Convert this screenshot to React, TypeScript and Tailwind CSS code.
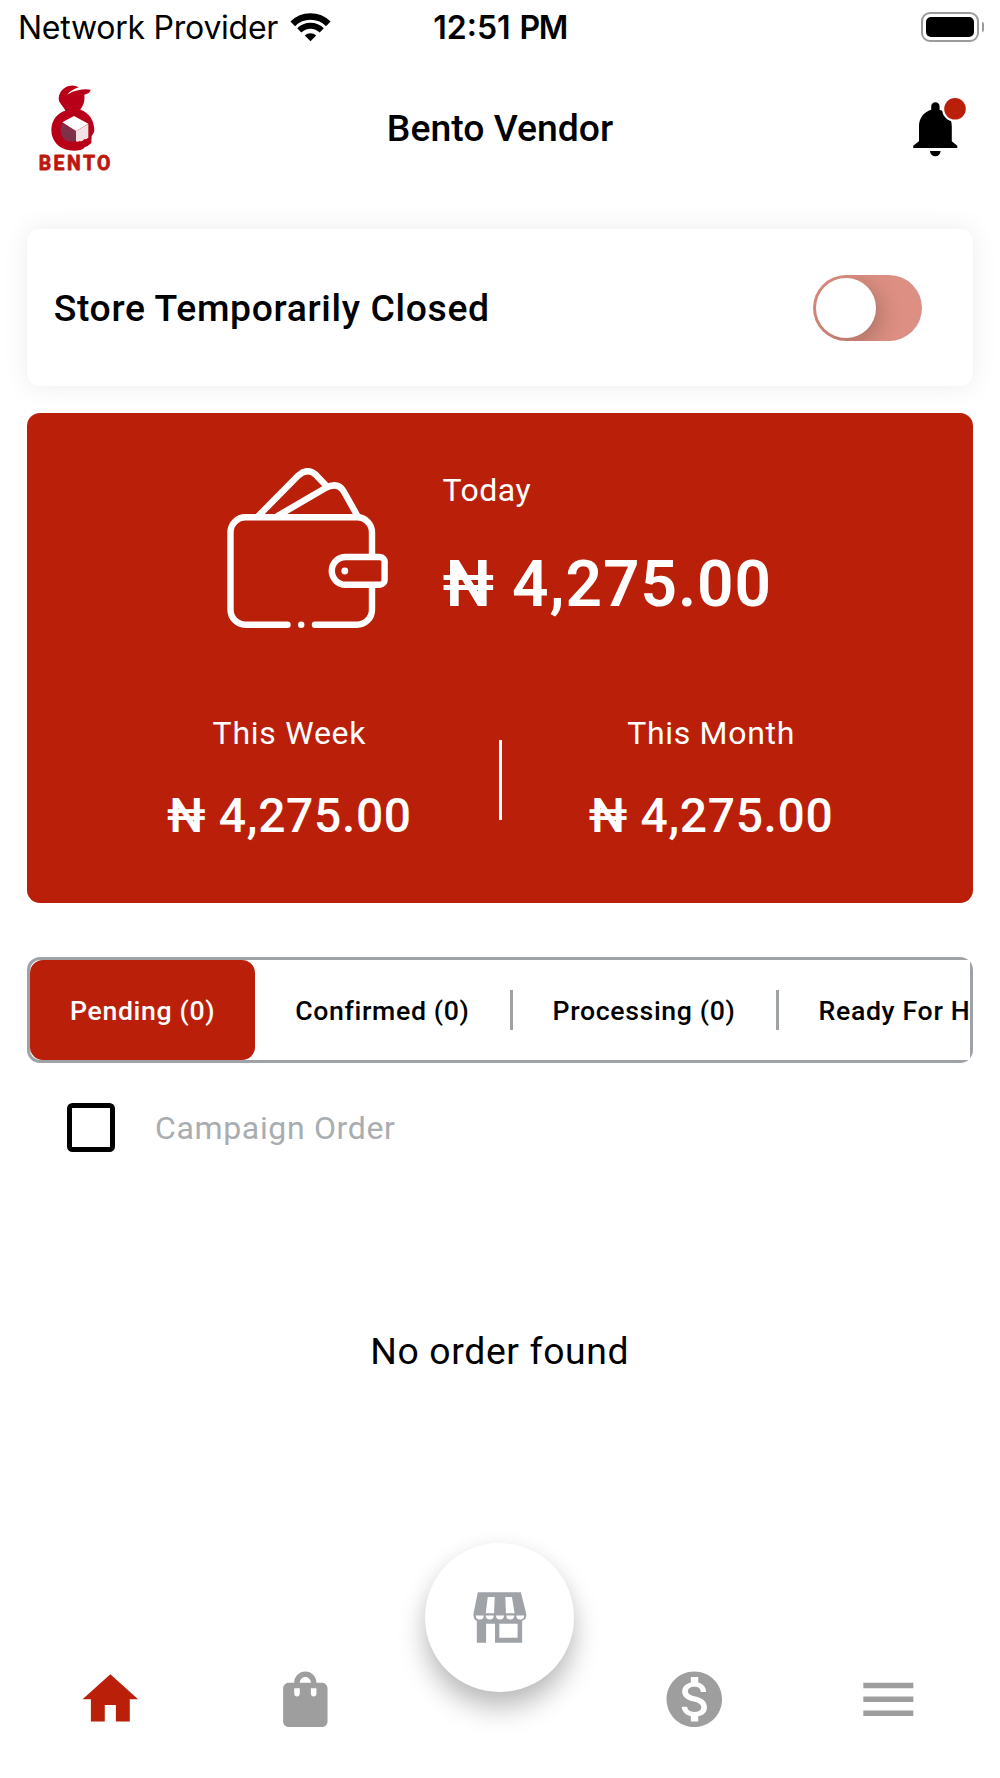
import { MdHome, MdMenu, MdMonetizationOn, MdShoppingBag } from "react-icons/md";

function WifiIcon() {
  return (
    <svg viewBox="0 0 42 30" className="w-[41px] h-[30px]" fill="none" stroke="#000">
      <path d="M2.8 11.8a25.8 25.8 0 0 1 36.4 0" strokeWidth="6.6" />
      <path d="M9.5 18.5a16.2 16.2 0 0 1 23 0" strokeWidth="6" />
      <path d="M21 29.6l-5.8-5.8a8.2 8.2 0 0 1 11.6 0z" fill="#000" stroke="none" />
    </svg>
  );
}

function Battery() {
  return (
    <div className="flex items-center gap-[3px]">
      <div className="w-[58px] h-[30px] rounded-[9px] border-2 border-[#9b9b9b] p-[3px]">
        <div className="w-full h-full rounded-[5px] bg-black"></div>
      </div>
      <div className="w-[2px] h-[10px] rounded-r-full bg-[#9b9b9b]"></div>
    </div>
  );
}

function BentoLogo() {
  return (
    <svg viewBox="27 30 216 258" className="w-[72px] h-[86px] ml-[6px] overflow-visible">
      <path
        d="M106 107C100 93 86 85 86 70C87 48 105 33 123 32Q137 31 146 37Q122 45 112 59Q126 49 145 46Q163 41 182 44Q181 54 163 59C165 80 160 90 151 104C178 113 193 137 193 166Q192 176 185 183L184 204Q175 213 164 217Q161 223 151 225C139 228 128 228 118 226C87 222 64 197 64 165C64 137 81 114 106 107z"
        fill="#b90019"
      />
      <path d="M97 144L138 168V198Q119 202 106 196Q82 174 97 144z" fill="#803149" />
      <path d="M97 142L132 123L175 146L138 168z" fill="#fff" />
      <path d="M138 168L175 147V188Q166 194 163 192Q157 201 149 198Q143 202 138 199z" fill="#f3e2e4" />
      <text
        x="28"
        y="285"
        transform="scale(.94 1)"
        fontFamily="Roboto, sans-serif"
        fontSize="62"
        fontWeight="700"
        fill="#bd170e"
        stroke="#bd170e"
        strokeWidth="2.5"
        strokeLinejoin="round"
        textLength="229"
      >
        BENTO
      </text>
    </svg>
  );
}

function BellIcon() {
  return (
    <svg viewBox="0 0 54 60" className="w-[54px] h-[60px]">
      <path
        d="M18.2 8.5a4.2 4.2 0 0 1 8.4 0v3.2C34 14 38.8 20 38.8 28v15.2l5.5 4.6v2.3H.2v-2.3L6 43.2V28c0-8 4.8-14 12.2-16.3z"
        fill="#000"
      />
      <path d="M17 53h10.6a5.3 5.3 0 0 1-10.6 0z" fill="#000" />
      <circle cx="42" cy="10.8" r="13" fill="#fff" />
      <circle cx="42" cy="10.8" r="10.8" fill="#ba2009" />
    </svg>
  );
}

function WalletIcon() {
  return (
    <svg
      viewBox="0 0 161 160"
      className="w-[161px] h-[160px]"
      fill="none"
      stroke="#fff"
      strokeWidth="6.4"
      strokeLinecap="round"
      strokeLinejoin="round"
    >
      <path d="M60.5 156.7H18.5a15 15 0 0 1-15-15V64.3a15 15 0 0 1 15-15H130a15 15 0 0 1 15 15V88" />
      <path d="M145 118v23.7a15 15 0 0 1-15 15H88" />
      <path d="M157.6 95v16a5 5 0 0 1-5 5.7H118.6a13.85 13.85 0 0 1 0-27.7h34a5 5 0 0 1 5 6z" />
      <path d="M31.3 48L71.5 7.3Q80.3-.5 88.5 6.5L99 17.5" />
      <path d="M50.5 48L98.5 20Q110.5 13.5 116.5 23L130.5 48" />
      <circle cx="74.2" cy="156.7" r="3.2" fill="#fff" stroke="none" />
      <circle cx="117.8" cy="103" r="3.4" fill="#fff" stroke="none" />
    </svg>
  );
}

function StoreIcon() {
  return (
    <svg viewBox="218 217 162 154" className="w-[54px] h-[51px]">
      <path d="M232 218H362L378 282V290Q378 300 366 304V370H284V313H257V370H229V304Q219 300 219 288V282z" fill="#9fa3a8" />
      <path d="M262 232H283L281 281H256zM315 232H335L343 281H317zM297 313H352V355H297z" fill="#fff" />
      <path
        d="M226 288h24a12 12 0 0 1-24 0zM256 288h24a12 12 0 0 1-24 0zM287 288h24a12 12 0 0 1-24 0zM318 288h24a12 12 0 0 1-24 0zM348 288h24a12 12 0 0 1-24 0z"
        fill="#fff"
      />
    </svg>
  );
}

function Divider() {
  return <div className="w-[3px] h-10 shrink-0 bg-[#9fa3a8]"></div>;
}

export default function App() {
  return (
    <div className="w-[1000px] h-[1778px] flex flex-col bg-white text-black overflow-hidden font-[Roboto,sans-serif] whitespace-nowrap">
      <div className="h-[53px] grid grid-cols-[1fr_auto_1fr] items-center px-4 font-[Inter,sans-serif] text-[32px]">
        <div className="flex items-center gap-[12px] pl-[2px]">
          <span className="pt-[2px] tracking-[-0.25px]">Network Provider</span>
          <WifiIcon />
        </div>
        <div className="flex gap-[9px] pt-[2px] font-semibold">
          <span className="tracking-[0px]">12:51</span>
          <span className="tracking-[-1.5px]">PM</span>
        </div>
        <div className="flex justify-end">
          <Battery />
        </div>
      </div>

      <header className="h-[150px] grid grid-cols-[1fr_auto_1fr] items-center px-[33px]">
        <BentoLogo />
        <h1 className="pt-[2px] text-[37.33px] font-medium">Bento Vendor</h1>
        <div className="flex justify-end">
          <BellIcon />
        </div>
      </header>

      <main className="flex-1 flex flex-col pl-[27px] pr-[27.5px] pt-[26px]">
        <section className="h-[157px] shrink-0 flex items-center justify-between pl-[26.67px] pr-[51px] rounded-[13px] bg-white shadow-[0_0_27px_rgba(0,0,0,0.08)]">
          <h2 className="pt-[2px] text-[37.33px] font-medium tracking-[0.65px]">Store Temporarily Closed</h2>
          <button className="w-[109px] h-[66px] rounded-full bg-[#dc8f82] p-[3px] overflow-hidden">
            <span className="block size-[60px] rounded-full bg-white shadow-[4px_6px_22px_rgba(0,0,0,0.22)]"></span>
          </button>
        </section>

        <section className="h-[490px] shrink-0 mt-[27px] rounded-[13px] bg-[#ba2009] text-white">
          <div className="flex justify-center pt-[55px] gap-[54px]">
            <WalletIcon />
            <div className="flex flex-col">
              <span className="text-[32px] leading-[44px] tracking-[0.5px]">Today</span>
              <strong className="mt-[40.5px] text-[64px] leading-[64px] font-semibold tracking-[0.95px]">₦ 4,275.00</strong>
            </div>
          </div>
          <div className="flex justify-center mt-[82.5px]">
            <div className="w-[420px] flex flex-col items-center">
              <span className="text-[32px] leading-[44px] tracking-[0.75px]">This Week</span>
              <strong className="mt-[37px] text-[48px] leading-[48px] font-medium tracking-[0.65px]">₦ 4,275.00</strong>
            </div>
            <div className="w-[2.67px] h-20 mt-[29.5px] bg-white"></div>
            <div className="w-[418px] flex flex-col items-center">
              <span className="text-[32px] leading-[44px] tracking-[0.7px]">This Month</span>
              <strong className="mt-[37px] text-[48px] leading-[48px] font-medium tracking-[0.65px]">₦ 4,275.00</strong>
            </div>
          </div>
        </section>

        <div className="h-[106px] shrink-0 mt-[54px] rounded-[13px] border-[3px] border-[#9fa3a8]">
          <div className="h-full flex items-center overflow-hidden text-[26.67px] font-medium tracking-[0.65px]">
            <button className="h-full shrink-0 px-10 pt-[2px] rounded-[13px] bg-[#ba2009] text-white">Pending (0)</button>
            <div className="h-full shrink-0 flex items-center bg-white">
              <span className="px-10 pt-[2px]">Confirmed (0)</span>
              <Divider />
              <span className="px-10 pt-[2px]">Processing (0)</span>
              <Divider />
              <span className="px-10 pt-[2px]">Ready For H</span>
            </div>
          </div>
        </div>

        <label className="flex items-center mt-[40px] pl-[39.5px] gap-10 text-[32px] text-[#a9adb1] tracking-[0.65px]">
          <span className="size-[48.5px] rounded-[5.5px] border-[5.33px] border-black"></span>
          <span className="pt-[1px]">Campaign Order</span>
        </label>

        <p className="mt-[175px] text-center text-[37.33px] leading-[48px] tracking-[0.65px]">No order found</p>
      </main>

      <nav className="h-[235px] flex pl-[13.5px] pr-[14px] text-[66.67px] text-[#9e9e9e]">
        <div className="flex-1 flex justify-center pt-[123px]">
          <MdHome className="text-[#ba2009]" />
        </div>
        <div className="flex-1 flex justify-center pt-[123px]">
          <MdShoppingBag />
        </div>
        <div className="flex-1 flex justify-center">
          <button className="size-[149px] flex items-center justify-center rounded-full bg-white shadow-[0_16px_27px_rgba(0,0,0,0.26),0_0_20px_rgba(0,0,0,0.03)]">
            <StoreIcon />
          </button>
        </div>
        <div className="flex-1 flex justify-center pt-[123px]">
          <MdMonetizationOn />
        </div>
        <div className="flex-1 flex justify-center pt-[123px]">
          <MdMenu />
        </div>
      </nav>
    </div>
  );
}
